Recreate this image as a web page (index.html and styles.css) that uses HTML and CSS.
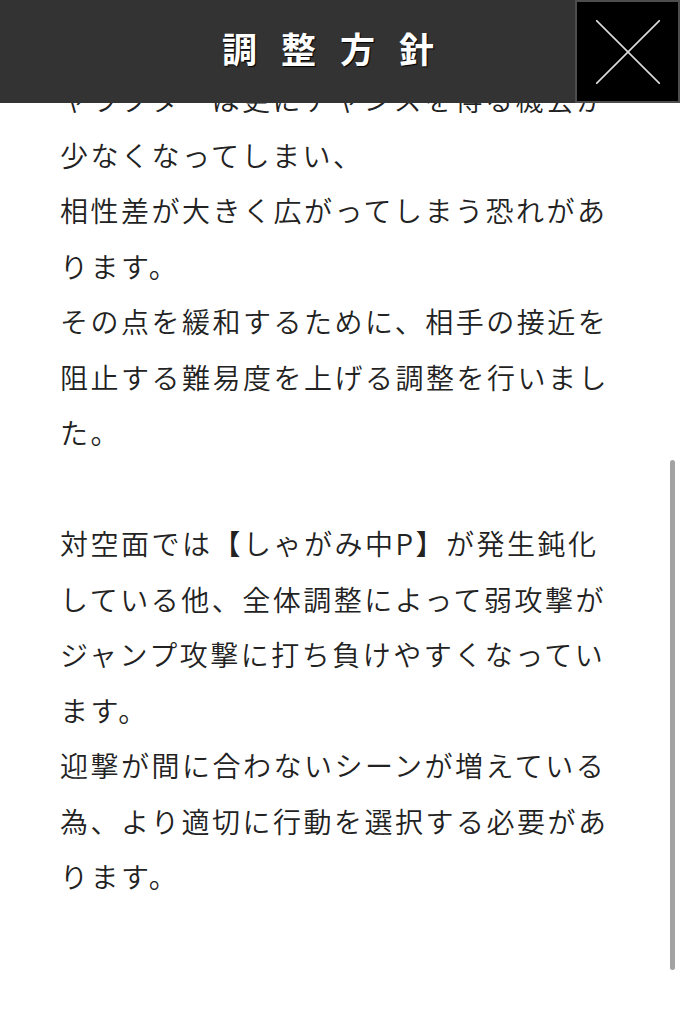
FILE: index.html
```html
<!DOCTYPE html>
<html lang="ja">
<head>
  <meta charset="UTF-8">
  <title>調整方針</title>
  <link rel="stylesheet" href="styles.css">
</head>
<body>

  <div class="modal-head">
    <span class="spacer"></span>
    <h1 class="modal-title">調整方針</h1>
    <button class="close-btn" aria-label="閉じる">
      <svg width="64" height="64" viewBox="0 0 64 64">
        <line x1="0" y1="0" x2="64" y2="64" />
        <line x1="64" y1="0" x2="0" y2="64" />
      </svg>
    </button>
  </div>

  <div class="modal-body">
    <p>
      ャラクターは更にチャンスを得る機会が少なくなってしまい、<br>
      相性差が大きく広がってしまう恐れがあります。<br>
      その点を緩和するために、相手の接近を阻止する難易度を上げる調整を行いました。<br>
      <br>
      対空面では【しゃがみ中P】が発生鈍化している他、全体調整によって弱攻撃がジャンプ攻撃に打ち負けやすくなっています。<br>
      迎撃が間に合わないシーンが増えている為、より適切に行動を選択する必要があります。
    </p>
  </div>

  <div class="scroll-thumb"></div>

</body>
</html>
```

FILE: styles.css
```css
:root {
  --head-bg: #333;
  --head-line: #4d4d4d;
  --ink: #222;
  --thumb: #a3a3a3;
}
body {
  margin: 0;
  background: #fff;
  color: var(--ink);
  font-family: "Noto Sans CJK JP", "Noto Sans", sans-serif;
}

/* fixed title bar */
.modal-head {
  position: fixed;
  top: 0;
  left: 0;
  right: 0;
  height: 103px;
  display: grid;
  grid-template-columns: 105px 1fr 105px;
  align-items: center;
  background: var(--head-bg);
  z-index: 2;
}
.modal-title {
  margin: 0;
  padding-bottom: 8px;
  text-align: center;
  color: #fff;
  font-size: 35px;
  font-weight: 700;
  letter-spacing: 24px;
  line-height: 1;
  text-shadow: 1px 1px 1px #000;
}
.close-btn {
  height: 103px;
  width: 105px;
  padding: 0;
  background: #000;
  border: 2px solid var(--head-line);
  display: flex;
  align-items: center;
  justify-content: center;
  cursor: pointer;
}
.close-btn line {
  stroke: #ddd;
  stroke-width: 1.6;
}

/* body text, scrolled under the bar */
.modal-body {
  padding: 72px 60px 0;
}
.modal-body p {
  margin: 0;
  width: 560px;
  font-size: 28px;
  font-weight: 350;
  line-height: 55.5px;
  letter-spacing: 2.5px;
  line-break: normal;
}

.scroll-thumb {
  position: fixed;
  top: 460px;
  right: 5px;
  width: 5px;
  height: 510px;
  border-radius: 3px;
  background: var(--thumb);
}
```
